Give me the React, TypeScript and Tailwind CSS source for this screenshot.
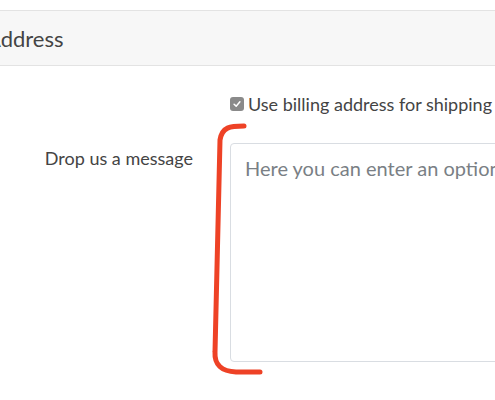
export default function App() {
  return (
    <div
      className="relative h-[400px] w-[495px] overflow-hidden bg-white text-[#444]"
      style={{ fontFamily: 'Lato, "Open Sans", sans-serif' }}
    >
      <div className="mt-[10px] flex h-[56px] items-center border-y border-[#e3e3e3] bg-[#f7f7f7]">
        <h3 className="ml-[-14px] whitespace-nowrap text-[22px] font-normal">Address</h3>
      </div>

      <div className="flex w-[700px] pt-[26px]">
        <div className="w-[230px] shrink-0" />
        <label className="flex h-[24px] items-center gap-[4px] whitespace-nowrap text-[18px] leading-[24px]">
          <span className="flex h-[14px] w-[14px] items-center justify-center rounded-[3px] bg-[#8a8a8a]">
            <svg viewBox="0 0 12 12" className="h-[10px] w-[10px]" fill="none" stroke="white" strokeWidth="1.8" strokeLinecap="round" strokeLinejoin="round">
              <path d="M2.5 6.3 L5 8.6 L9.5 3.4" />
            </svg>
          </span>
          Use billing address for shipping
        </label>
      </div>

      <div className="flex w-[700px] pt-[27px]">
        <div className="w-[230px] shrink-0 pr-[37px] pt-[3px] text-right text-[18px] leading-[24px]">Drop us a message</div>
        <textarea
          className="h-[219px] w-[420px] resize-none rounded-[4px] border border-[#d9dde2] px-[14px] py-[9px] text-[20px] placeholder-[#7a7f85] outline-none"
          placeholder="Here you can enter an optional message"
        />
      </div>

      <svg className="pointer-events-none absolute left-0 top-0" width="495" height="400" viewBox="0 0 495 400" fill="none">
        <path
          d="M244 126 C230 126 222 127 220 140 L215 352 Q214 371 236 372 L260 372"
          stroke="#ee4226"
          strokeWidth="5"
          strokeLinecap="round"
          strokeLinejoin="round"
        />
      </svg>
    </div>
  );
}
